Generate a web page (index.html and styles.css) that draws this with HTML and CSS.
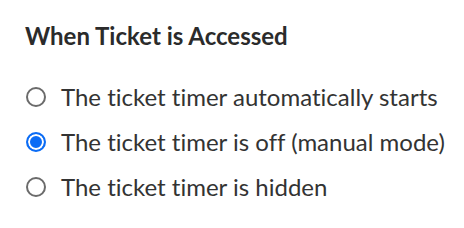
FILE: index.html
```html
<!DOCTYPE html>
<html lang="en">
  <head>
    <meta charset="UTF-8" />
    <title>Ticket Settings</title>
    <link rel="stylesheet" href="styles.css">
  </head>
  <body>
    <div class="setting">
      <h2 class="setting-title">When Ticket is Accessed</h2>
      <label class="option">
        <input type="radio" name="timer" value="auto" />
        <span>The ticket timer automatically starts</span>
      </label>
      <label class="option">
        <input type="radio" name="timer" value="off" checked />
        <span>The ticket timer is off (manual mode)</span>
      </label>
      <label class="option">
        <input type="radio" name="timer" value="hidden" />
        <span>The ticket timer is hidden</span>
      </label>
    </div>
  </body>
</html>
```

FILE: styles.css
```css
body {
  margin: 0;
  background-color: #fff;
  font-family: Lato, "Open Sans", sans-serif;
  font-variant-ligatures: none;
  color: #333;
}

.setting {
  padding: 21px 0 21px 25px;
  display: flex;
  flex-direction: column;
}

.setting-title {
  margin: 0 0 23px 0;
  font-size: 24px;
  font-weight: 700;
  color: #2b2b2b;
  line-height: 30px;
}

.option {
  display: flex;
  align-items: center;
  gap: 15px;
  height: 45px;
  font-size: 24px;
  white-space: nowrap;
}

.option input {
  -webkit-appearance: none;
  appearance: none;
  flex: none;
  margin: 0 0 0 1px;
  width: 20px;
  height: 20px;
  border: 2px solid #6b6b6b;
  border-radius: 50%;
  box-sizing: border-box;
}

.option input:checked {
  border-color: #0b6cf5;
  background-color: #0b6cf5;
  box-shadow: inset 0 0 0 2px #fff;
}
```
